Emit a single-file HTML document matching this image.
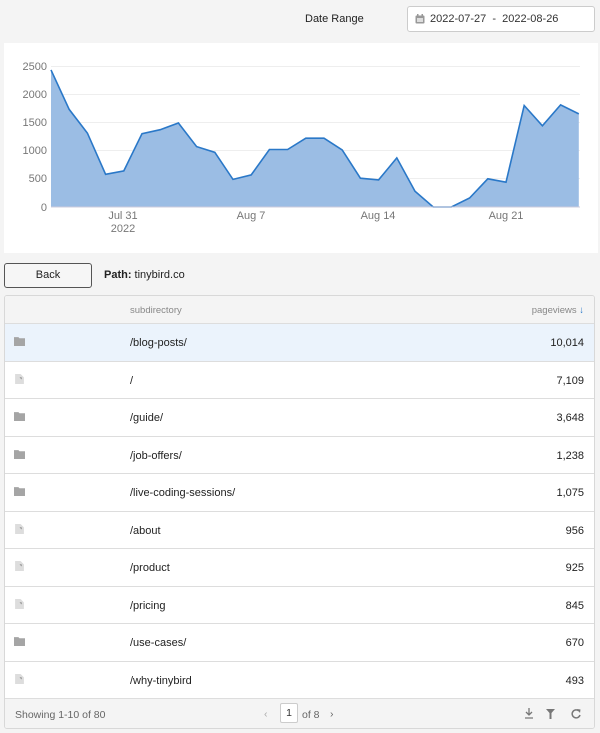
<!DOCTYPE html>
<html><head><meta charset="utf-8"><style>
*{box-sizing:border-box;margin:0;padding:0}
body{width:600px;height:733px;background:#f4f4f4;font-family:"Liberation Sans",sans-serif;color:#222;position:relative;overflow:hidden}
.abs{position:absolute}
.dr{left:407px;top:6px;width:188px;height:26px;border:1px solid #ccc;border-radius:3px;background:#fff;font-size:11px;line-height:24px;padding-left:22px;color:#333}
.chart{left:4px;top:43px;width:594px;height:210px;background:#fff}
.back{left:4px;top:263px;width:88px;height:25px;border:1px solid #555;border-radius:3px;background:#f6f6f6;font-size:11px;text-align:center;line-height:23px}
.tbl{left:4px;top:295px;width:591px;height:434px;border:1px solid #d8d8d8;border-radius:3px;background:#fff;overflow:hidden}
.row{position:absolute;left:0;width:100%;height:37.5px;border-bottom:1px solid #ddd;font-size:11px}
.row .p{position:absolute;left:125px;top:13px}
.row .v{position:absolute;right:10px;top:13px}
.ic{position:absolute;left:9px;top:12px;width:11px;height:10px}
.foot{position:absolute;left:0;top:402px;width:100%;height:32px;background:#f4f4f4;font-size:10.5px;color:#666;border-top:1px solid #ddd}
</style></head><body>
<div class="abs" style="left:305px;top:13px;font-size:11px">Date Range</div>
<div class="abs dr"><svg class="abs" style="left:7px;top:7px" width="10" height="10"><rect x="0.5" y="1.5" width="9" height="8" rx="1" fill="#999"/><rect x="2" y="4" width="6" height="4" fill="#ddd"/><rect x="2" y="0" width="1.5" height="3" fill="#999"/><rect x="6.5" y="0" width="1.5" height="3" fill="#999"/></svg>2022-07-27 &nbsp;-&nbsp; 2022-08-26</div>
<div class="abs chart"></div>
<svg class="abs" style="left:0;top:0" width="600" height="260">
<g stroke="#eee" stroke-width="1"><line x1="51" x2="580" y1="66.5" y2="66.5"/><line x1="51" x2="580" y1="94.5" y2="94.5"/><line x1="51" x2="580" y1="122.5" y2="122.5"/><line x1="51" x2="580" y1="150.5" y2="150.5"/><line x1="51" x2="580" y1="178.5" y2="178.5"/></g>
<g font-size="11" fill="#777" text-anchor="end" font-family="Liberation Sans"><text x="47" y="70">2500</text><text x="47" y="98">2000</text><text x="47" y="126">1500</text><text x="47" y="154">1000</text><text x="47" y="182">500</text><text x="47" y="211">0</text></g>
<g font-size="11" fill="#777" text-anchor="middle" font-family="Liberation Sans"><text x="123" y="219">Jul 31</text><text x="123" y="232">2022</text><text x="251" y="219">Aug 7</text><text x="378" y="219">Aug 14</text><text x="506" y="219">Aug 21</text></g>
<path d="M51,69.9 L69.2,109.4 87.4,133.1 105.6,174.3 123.8,170.9 142,133.7 160.2,129.7 178.4,123 196.6,146.6 214.8,152.3 233,179.4 251.2,174.9 269.4,149.5 287.6,149.5 305.8,138.2 324,138.2 342.2,150 360.4,178.2 378.6,179.9 396.8,157.9 415,191.2 433.2,207 451.4,207 469.6,198 487.8,178.8 506,182.2 524.2,105.5 542.4,125.8 560.6,104.9 578.8,113.9 L578.8,207 L51,207 Z" fill="#9bbde4"/>
<path d="M51,69.9 L69.2,109.4 87.4,133.1 105.6,174.3 123.8,170.9 142,133.7 160.2,129.7 178.4,123 196.6,146.6 214.8,152.3 233,179.4 251.2,174.9 269.4,149.5 287.6,149.5 305.8,138.2 324,138.2 342.2,150 360.4,178.2 378.6,179.9 396.8,157.9 415,191.2 433.2,207 451.4,207 469.6,198 487.8,178.8 506,182.2 524.2,105.5 542.4,125.8 560.6,104.9 578.8,113.9" fill="none" stroke="#2a78c8" stroke-width="1.6"/>
<line x1="51" x2="580" y1="207" y2="207" stroke="#ccd" />
</svg>
<div class="abs back">Back</div>
<div class="abs" style="left:104px;top:269px;font-size:11px"><b>Path:</b> tinybird.co</div>
<div class="abs tbl">
<div class="row" style="top:0;height:28px;background:#f4f4f4;color:#888;font-size:9.5px"><span class="p" style="top:9px">subdirectory</span><span class="v" style="top:9px">pageviews <span style="color:#2a78c8">↓</span></span></div>
<div class="row" style="top:28px;background:#ebf3fc"><svg class="ic" viewBox="0 0 10 9"><path d="M0 1h4l1 1h5v7H0z" fill="#a5a5a5"/></svg><span class="p">/blog-posts/</span><span class="v">10,014</span></div>
<div class="row" style="top:65.5px"><svg class="ic" viewBox="0 0 10 9"><path d="M1 0h5l3 3v6H1z" fill="#ddd"/><path d="M5 3h2v2z" fill="#888"/></svg><span class="p">/</span><span class="v">7,109</span></div>
<div class="row" style="top:103px"><svg class="ic" viewBox="0 0 10 9"><path d="M0 1h4l1 1h5v7H0z" fill="#a5a5a5"/></svg><span class="p">/guide/</span><span class="v">3,648</span></div>
<div class="row" style="top:140.5px"><svg class="ic" viewBox="0 0 10 9"><path d="M0 1h4l1 1h5v7H0z" fill="#a5a5a5"/></svg><span class="p">/job-offers/</span><span class="v">1,238</span></div>
<div class="row" style="top:178px"><svg class="ic" viewBox="0 0 10 9"><path d="M0 1h4l1 1h5v7H0z" fill="#a5a5a5"/></svg><span class="p">/live-coding-sessions/</span><span class="v">1,075</span></div>
<div class="row" style="top:215.5px"><svg class="ic" viewBox="0 0 10 9"><path d="M1 0h5l3 3v6H1z" fill="#ddd"/><path d="M5 3h2v2z" fill="#888"/></svg><span class="p">/about</span><span class="v">956</span></div>
<div class="row" style="top:253px"><svg class="ic" viewBox="0 0 10 9"><path d="M1 0h5l3 3v6H1z" fill="#ddd"/><path d="M5 3h2v2z" fill="#888"/></svg><span class="p">/product</span><span class="v">925</span></div>
<div class="row" style="top:290.5px"><svg class="ic" viewBox="0 0 10 9"><path d="M1 0h5l3 3v6H1z" fill="#ddd"/><path d="M5 3h2v2z" fill="#888"/></svg><span class="p">/pricing</span><span class="v">845</span></div>
<div class="row" style="top:328px"><svg class="ic" viewBox="0 0 10 9"><path d="M0 1h4l1 1h5v7H0z" fill="#a5a5a5"/></svg><span class="p">/use-cases/</span><span class="v">670</span></div>
<div class="row" style="top:365.5px"><svg class="ic" viewBox="0 0 10 9"><path d="M1 0h5l3 3v6H1z" fill="#ddd"/><path d="M5 3h2v2z" fill="#888"/></svg><span class="p">/why-tinybird</span><span class="v">493</span></div>
<div class="foot">
<span class="abs" style="left:10px;top:10px">Showing 1-10 of 80</span>
<span class="abs" style="left:259px;top:9px;color:#aaa">‹</span>
<span class="abs" style="left:275px;top:4px;width:18px;height:20px;border:1px solid #ccc;border-radius:2px;background:#fff;text-align:center;line-height:18px;color:#333">1</span>
<span class="abs" style="left:297px;top:10px">of 8</span>
<span class="abs" style="left:325px;top:9px">›</span>
<svg class="abs" style="left:519px;top:9px" width="60" height="12"><path d="M5 0v7M2 4l3 3 3-3M1 10h8" stroke="#777" fill="none" stroke-width="1.3"/><path d="M22 1h9l-3.5 4v6h-2V5z" fill="#777"/><path d="M55 3a4 4 0 1 0 1 4" stroke="#777" fill="none" stroke-width="1.5"/><path d="M53 1l3.5 0.5-0.5 3.5z" fill="#777"/></svg>
</div>
</div>
</body></html>
